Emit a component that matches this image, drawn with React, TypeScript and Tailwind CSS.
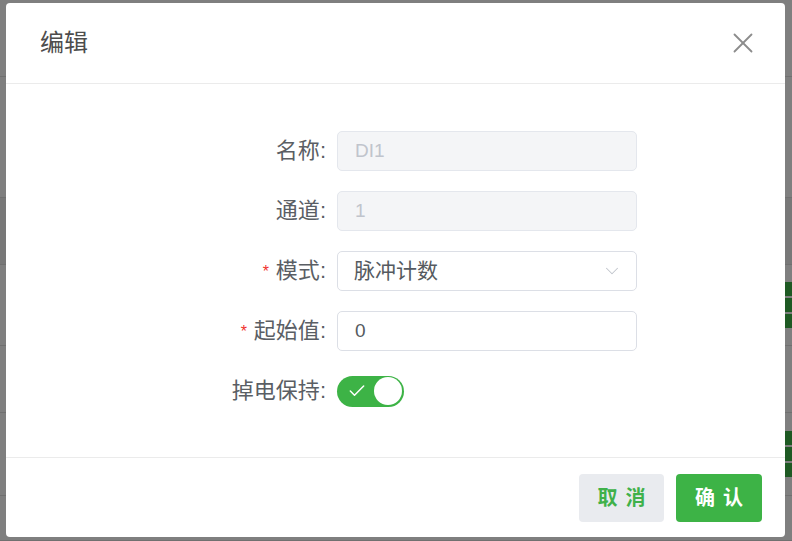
import React, { useState } from 'react';
import { X, ChevronDown, Check } from 'lucide-react';

const FONT = "font-['Liberation_Sans','Noto_Sans_CJK_SC',sans-serif]";

// 背景页面（被遮罩覆盖）
const BackgroundPage: React.FC = () => {
  const rows = [77, 121, 67, 81, 67, 83, 45];
  return (
    <div className="h-[541px] bg-white flex flex-col overflow-hidden">
      {rows.map((h, i) => (
        <div
          key={i}
          className={`flex border-b border-[#e0e0e0] ${i === 2 ? 'bg-[#f0f0f0]' : ''}`}
          style={{ height: h }}
        >
          <div className="flex-1" />
          <div className="w-[7px] flex flex-col justify-center gap-[2px]">
            {(i === 3 || i === 5) && (
              <>
                <div className="h-[14px] bg-[#3db346]" />
                <div className="h-[14px] bg-[#3db346]" />
                <div className="h-[14px] bg-[#3db346]" />
              </>
            )}
          </div>
        </div>
      ))}
    </div>
  );
};

const Field: React.FC<{ label: string; required?: boolean; children: React.ReactNode }> = ({
  label,
  required,
  children,
}) => (
  <div className="flex items-center h-[40px]">
    <div className="w-[131px] pr-[11px] text-right text-[22px] text-[#5a5e64] leading-none whitespace-nowrap">
      {required && <span className="text-[#f0302c] text-[16px] mr-[7px] align-middle">*</span>}
      {label}:
    </div>
    <div className="w-[300px]">{children}</div>
  </div>
);

const App: React.FC = () => {
  const [keep, setKeep] = useState(true);

  return (
    <div className={`relative w-[792px] h-[541px] overflow-hidden ${FONT}`}>
      <BackgroundPage />

      {/* 遮罩 + 弹窗 */}
      <div className="absolute inset-0 bg-black/50 pl-[6px] pt-[3px]">
        <div className="w-[779px] h-[534px] bg-white rounded-[4px] flex flex-col">
          {/* Header */}
          <div className="h-[81px] pl-[34px] pr-[25px] flex items-center justify-between border-b border-[#ebebeb]">
            <h2 className="text-[24px] text-[#4d4d4d] font-normal">编辑</h2>
            <X className="h-[34px] w-[34px] text-[#8c8c8c]" strokeWidth={1.3} />
          </div>

          {/* Form */}
          <div className="pt-[47px] pb-[46px] pl-[200px] flex flex-col gap-[20px]">
            <Field label="名称">
              <div className="h-[40px] rounded-[5px] border border-[#e4e7ed] bg-[#f4f5f7] px-[17px] flex items-center text-[19px] text-[#c0c4cc]">
                DI1
              </div>
            </Field>
            <Field label="通道">
              <div className="h-[40px] rounded-[5px] border border-[#e4e7ed] bg-[#f4f5f7] px-[17px] flex items-center text-[19px] text-[#c0c4cc]">
                1
              </div>
            </Field>
            <Field label="模式" required>
              <div className="h-[40px] rounded-[5px] border border-[#dcdfe6] bg-white pl-[16px] pr-[13px] flex items-center justify-between text-[21px] text-[#555a60]">
                <span>脉冲计数</span>
                <ChevronDown className="h-[22px] w-[22px] text-[#c0c4cc]" strokeWidth={1.1} />
              </div>
            </Field>
            <Field label="起始值" required>
              <div className="h-[40px] rounded-[5px] border border-[#dcdfe6] bg-white px-[17px] flex items-center text-[19px] text-[#555a60]">
                0
              </div>
            </Field>
            <Field label="掉电保持">
              <button
                onClick={() => setKeep(!keep)}
                className={`relative w-[67px] h-[31px] rounded-full flex items-center px-[2px] ${
                  keep ? 'bg-[#3db346] justify-end' : 'bg-[#dcdfe6] justify-start'
                }`}
              >
                {keep && (
                  <Check className="absolute left-[10px] h-[20px] w-[20px] text-white" strokeWidth={1.8} />
                )}
                <span className="h-[28px] w-[28px] rounded-full bg-white block" />
              </button>
            </Field>
          </div>

          {/* Footer */}
          <div className="border-t border-[#ebebeb] pt-[16px] pr-[23px] flex justify-end gap-[12px]">
            <button className="w-[85px] h-[48px] rounded-[4px] bg-[#e9ebef] text-[#3fb14a] text-[20px] font-bold tracking-[8px] pl-[8px]">
              取消
            </button>
            <button className="w-[86px] h-[48px] rounded-[4px] bg-[#3db346] text-white text-[20px] font-bold tracking-[8px] pl-[8px]">
              确认
            </button>
          </div>
        </div>
      </div>
    </div>
  );
};

export default App;
